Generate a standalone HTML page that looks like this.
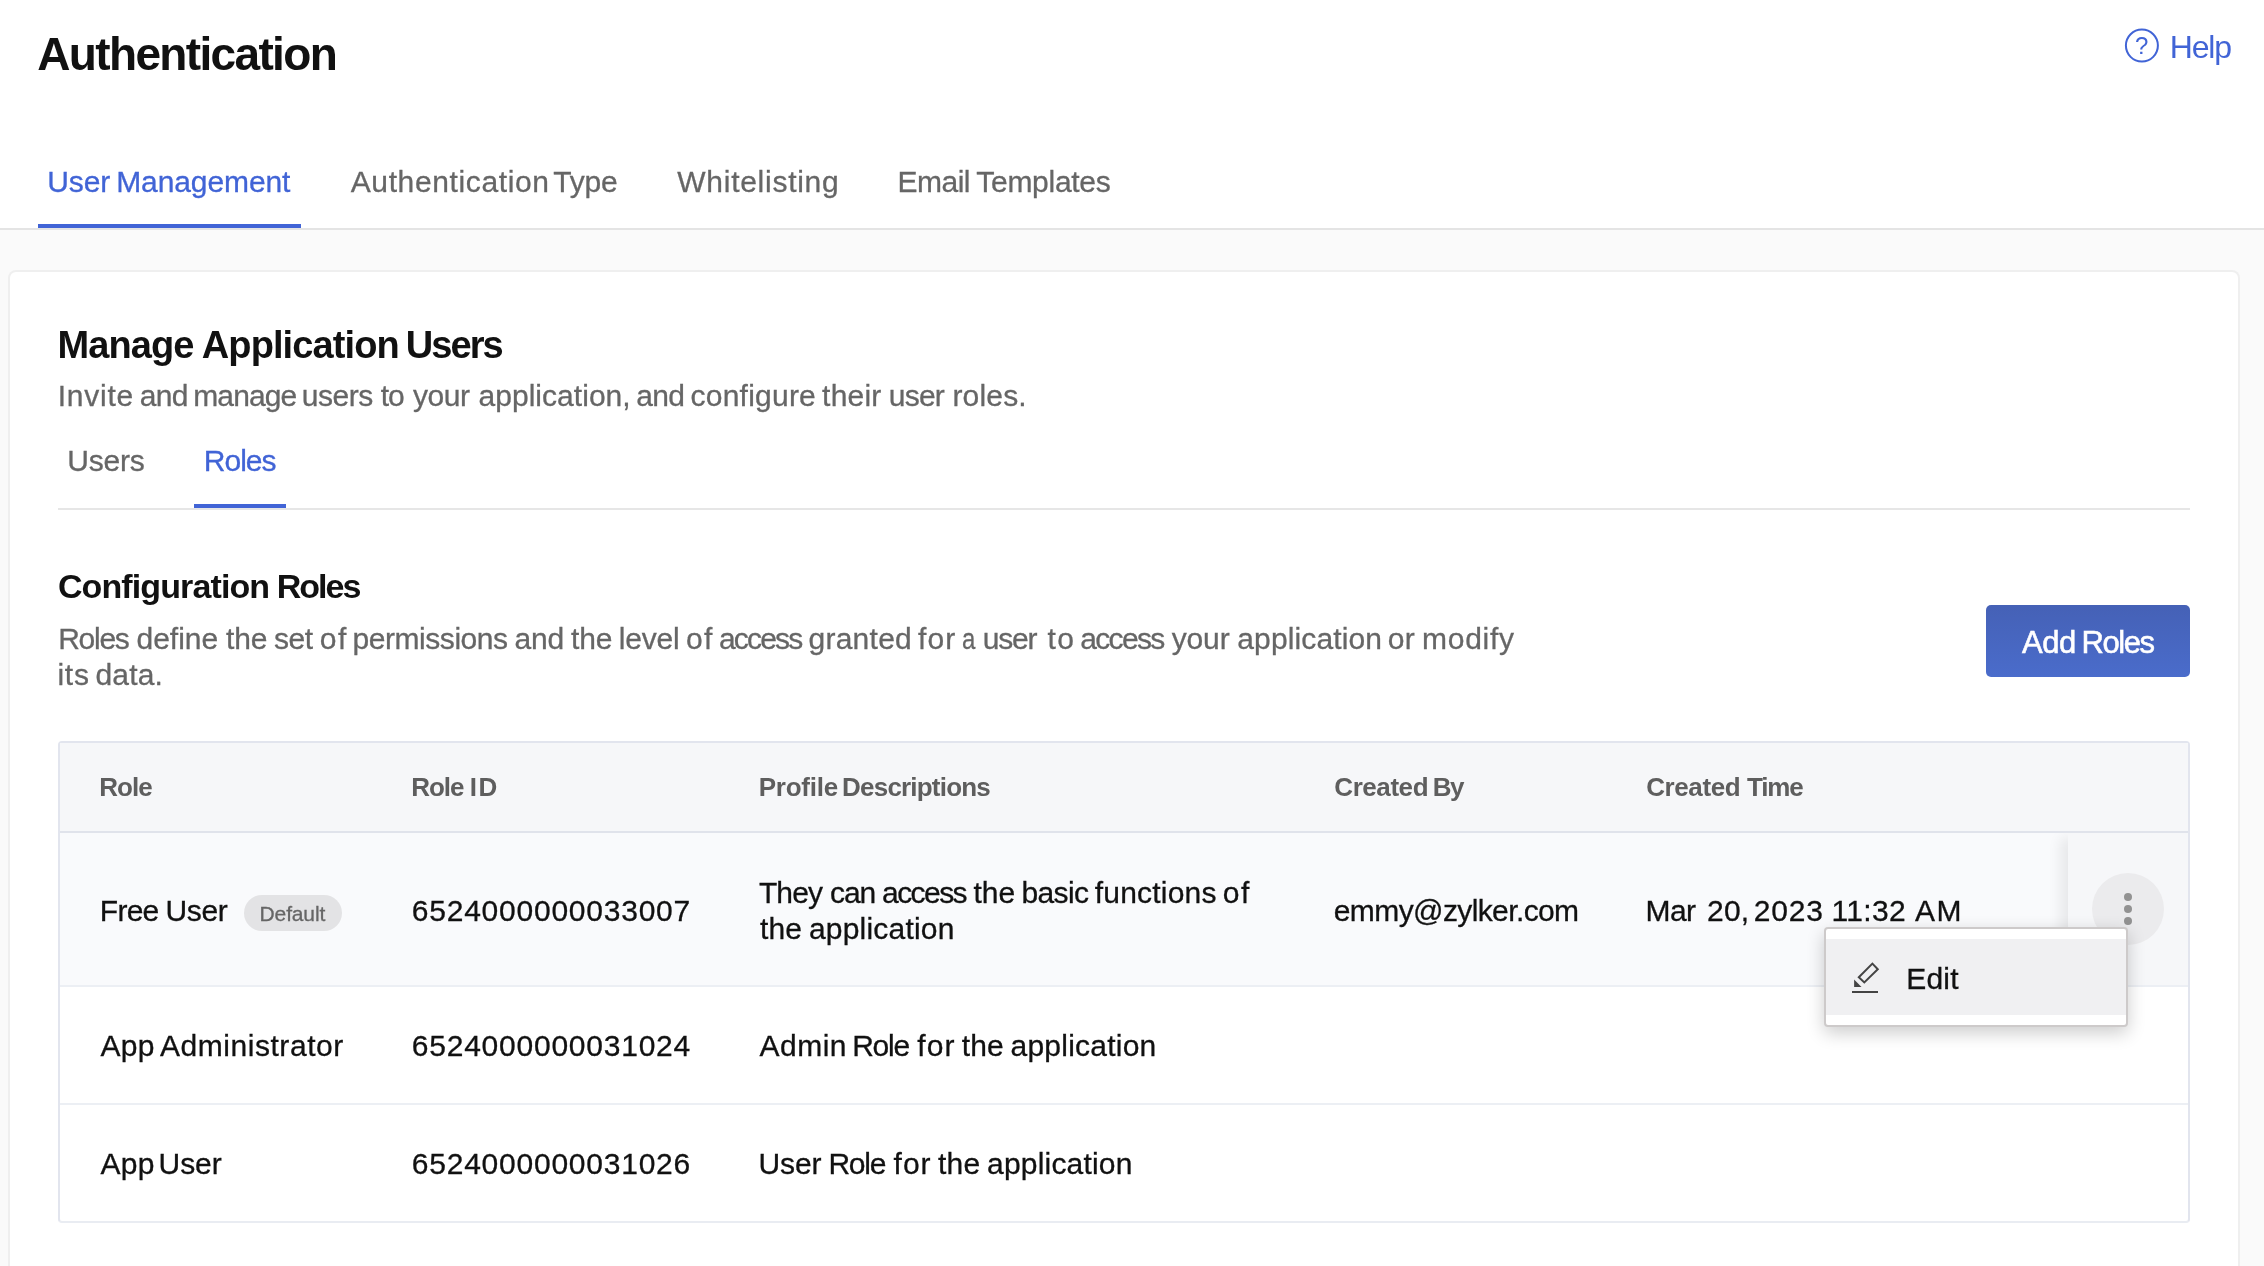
<!DOCTYPE html>
<html><head><meta charset="utf-8"><title>Authentication</title>
<style>
*{box-sizing:border-box;margin:0;padding:0}
html,body{width:2264px;height:1266px;overflow:hidden;background:#fafafa;font-family:"Liberation Sans",sans-serif}
.a{position:absolute}
#txt{position:absolute;left:0;top:0;width:2264px;height:1266px;will-change:transform}
.t{position:absolute;white-space:pre;font-family:"Liberation Sans",sans-serif}
#hdr{left:0;top:0;width:2264px;height:228px;background:#fff}
#hline{left:0;top:228px;width:2264px;height:2px;background:#e4e4e4}
#tabul{left:38px;top:224px;width:263px;height:4px;background:#4164d6}
#card{left:8px;top:270px;width:2232px;height:996px;background:#fff;border:2px solid #efefef;border-bottom:none;border-radius:8px 8px 0 0}
#stline{left:58px;top:508px;width:2132px;height:2px;background:#e6e6e6}
#stul{left:194px;top:504px;width:92px;height:4px;background:#4164d6}
#addbtn{left:1986px;top:605px;width:204px;height:72px;border-radius:5px;background:linear-gradient(#4561b6,#4a6ccb)}
#tbl{left:58px;top:741px;width:2132px;height:482px;border:2px solid #e2e5ee;border-bottom-color:#e9ecf2;border-radius:4px;background:#fff;overflow:hidden}
#thead{left:60px;top:743px;width:2128px;height:88px;background:#f6f7f9}
#thline{left:60px;top:831px;width:2128px;height:2px;background:#e0e3eb}
#row1{left:60px;top:833px;width:2128px;height:152px;background:#f9fafc}
#r1line{left:60px;top:985px;width:2128px;height:2px;background:#eceff4}
#r2line{left:60px;top:1103px;width:2128px;height:2px;background:#eceff4}
#sticky{left:2068px;top:833px;width:121px;height:152px;background:#f6f7f9;box-shadow:-8px 5px 12px rgba(0,0,0,0.07)}
#shclip{left:2030px;top:833px;width:158px;height:152px;overflow:hidden}
#dotbtn{left:2092px;top:873px;width:72px;height:72px;border-radius:50%;background:#ebebed}
.dot{position:absolute;left:2124px;width:8px;height:8px;border-radius:50%;background:#929292}
#badge{left:244px;top:895px;width:98px;height:36px;border-radius:18px;background:#e3e3e5}
#menu{left:1824px;top:927px;width:304px;height:100px;background:#fff;border:2px solid #cdcaca;border-radius:4px;box-shadow:0 6px 18px rgba(0,0,0,0.20)}
#mitem{left:1826px;top:939px;width:300px;height:76px;background:#f0f0f2}

#title{left:37.30px;top:30.56px;font-size:46px;line-height:46px;font-weight:700;color:#111111;letter-spacing:-1.654px}
#tab1_0{left:47.20px;top:166.60px;font-size:30px;line-height:30px;font-weight:400;color:#4164d6;letter-spacing:-0.100px;-webkit-text-stroke:0.3px currentColor}
#tab1_1{left:116.20px;top:166.60px;font-size:30px;line-height:30px;font-weight:400;color:#4164d6;letter-spacing:-0.100px;-webkit-text-stroke:0.3px currentColor}
#tab2_0{left:350.70px;top:166.60px;font-size:30px;line-height:30px;font-weight:400;color:#666666;letter-spacing:0.623px;-webkit-text-stroke:0.3px currentColor}
#tab2_1{left:553.20px;top:166.60px;font-size:30px;line-height:30px;font-weight:400;color:#666666;letter-spacing:-0.200px;-webkit-text-stroke:0.3px currentColor}
#tab3{left:677.30px;top:166.60px;font-size:30px;line-height:30px;font-weight:400;color:#666666;letter-spacing:0.727px;-webkit-text-stroke:0.3px currentColor}
#tab4_0{left:897.50px;top:166.60px;font-size:30px;line-height:30px;font-weight:400;color:#666666;letter-spacing:-0.500px;-webkit-text-stroke:0.3px currentColor}
#tab4_1{left:976.30px;top:166.60px;font-size:30px;line-height:30px;font-weight:400;color:#666666;letter-spacing:-0.287px;-webkit-text-stroke:0.3px currentColor}
#help{left:2169.80px;top:30.91px;font-size:32px;line-height:32px;font-weight:400;color:#4164d6;letter-spacing:-1.167px}
#h2_0{left:57.60px;top:325.83px;font-size:38px;line-height:38px;font-weight:700;color:#111111;letter-spacing:-0.960px}
#h2_1{left:201.80px;top:325.83px;font-size:38px;line-height:38px;font-weight:700;color:#111111;letter-spacing:-0.900px}
#h2_2{left:405.80px;top:325.83px;font-size:38px;line-height:38px;font-weight:700;color:#111111;letter-spacing:-1.925px}
#sub_0{left:57.70px;top:380.61px;font-size:30px;line-height:30px;font-weight:400;color:#666666;letter-spacing:0.760px;-webkit-text-stroke:0.3px currentColor}
#sub_1{left:139.80px;top:380.61px;font-size:30px;line-height:30px;font-weight:400;color:#666666;letter-spacing:-0.750px;-webkit-text-stroke:0.3px currentColor}
#sub_2{left:193.20px;top:380.61px;font-size:30px;line-height:30px;font-weight:400;color:#666666;letter-spacing:-0.860px;-webkit-text-stroke:0.3px currentColor}
#sub_3{left:301.80px;top:380.61px;font-size:30px;line-height:30px;font-weight:400;color:#666666;letter-spacing:-0.475px;-webkit-text-stroke:0.3px currentColor}
#sub_4{left:380.70px;top:380.61px;font-size:30px;line-height:30px;font-weight:400;color:#666666;letter-spacing:-1.000px;-webkit-text-stroke:0.3px currentColor}
#sub_5{left:413.00px;top:380.61px;font-size:30px;line-height:30px;font-weight:400;color:#666666;letter-spacing:-0.467px;-webkit-text-stroke:0.3px currentColor}
#sub_6{left:478.50px;top:380.61px;font-size:30px;line-height:30px;font-weight:400;color:#666666;letter-spacing:0.036px;-webkit-text-stroke:0.3px currentColor}
#sub_7{left:636.20px;top:380.61px;font-size:30px;line-height:30px;font-weight:400;color:#666666;letter-spacing:-0.600px;-webkit-text-stroke:0.3px currentColor}
#sub_8{left:690.50px;top:380.61px;font-size:30px;line-height:30px;font-weight:400;color:#666666;letter-spacing:0.237px;-webkit-text-stroke:0.3px currentColor}
#sub_9{left:822.10px;top:380.61px;font-size:30px;line-height:30px;font-weight:400;color:#666666;letter-spacing:0.200px;-webkit-text-stroke:0.3px currentColor}
#sub_10{left:888.80px;top:380.61px;font-size:30px;line-height:30px;font-weight:400;color:#666666;letter-spacing:-0.767px;-webkit-text-stroke:0.3px currentColor}
#sub_11{left:952.40px;top:380.61px;font-size:30px;line-height:30px;font-weight:400;color:#666666;letter-spacing:0.180px;-webkit-text-stroke:0.3px currentColor}
#st1{left:67.30px;top:446.11px;font-size:30px;line-height:30px;font-weight:400;color:#666666;letter-spacing:-0.250px;-webkit-text-stroke:0.3px currentColor}
#st2{left:203.80px;top:446.11px;font-size:30px;line-height:30px;font-weight:400;color:#4164d6;letter-spacing:-1.000px;-webkit-text-stroke:0.3px currentColor}
#h3_0{left:57.90px;top:568.72px;font-size:34px;line-height:34px;font-weight:700;color:#111111;letter-spacing:-0.883px}
#h3_1{left:276.80px;top:568.72px;font-size:34px;line-height:34px;font-weight:700;color:#111111;letter-spacing:-2.000px}
#d1_0{left:58.20px;top:623.61px;font-size:30px;line-height:30px;font-weight:400;color:#666666;letter-spacing:-1.275px;-webkit-text-stroke:0.3px currentColor}
#d1_1{left:136.50px;top:623.61px;font-size:30px;line-height:30px;font-weight:400;color:#666666;letter-spacing:0.000px;-webkit-text-stroke:0.3px currentColor}
#d1_2{left:225.90px;top:623.61px;font-size:30px;line-height:30px;font-weight:400;color:#666666;letter-spacing:-0.100px;-webkit-text-stroke:0.3px currentColor}
#d1_3{left:274.10px;top:623.61px;font-size:30px;line-height:30px;font-weight:400;color:#666666;letter-spacing:-0.500px;-webkit-text-stroke:0.3px currentColor}
#d1_4{left:319.80px;top:623.61px;font-size:30px;line-height:30px;font-weight:400;color:#666666;letter-spacing:1.500px;-webkit-text-stroke:0.3px currentColor}
#d1_5{left:352.60px;top:623.61px;font-size:30px;line-height:30px;font-weight:400;color:#666666;letter-spacing:-0.460px;-webkit-text-stroke:0.3px currentColor}
#d1_6{left:514.50px;top:623.61px;font-size:30px;line-height:30px;font-weight:400;color:#666666;letter-spacing:-0.200px;-webkit-text-stroke:0.3px currentColor}
#d1_7{left:571.00px;top:623.61px;font-size:30px;line-height:30px;font-weight:400;color:#666666;letter-spacing:-0.100px;-webkit-text-stroke:0.3px currentColor}
#d1_8{left:618.70px;top:623.61px;font-size:30px;line-height:30px;font-weight:400;color:#666666;letter-spacing:-0.150px;-webkit-text-stroke:0.3px currentColor}
#d1_9{left:685.90px;top:623.61px;font-size:30px;line-height:30px;font-weight:400;color:#666666;letter-spacing:1.400px;-webkit-text-stroke:0.3px currentColor}
#d1_10{left:719.00px;top:623.61px;font-size:30px;line-height:30px;font-weight:400;color:#666666;letter-spacing:-1.840px;-webkit-text-stroke:0.3px currentColor}
#d1_11{left:808.50px;top:623.61px;font-size:30px;line-height:30px;font-weight:400;color:#666666;letter-spacing:0.250px;-webkit-text-stroke:0.3px currentColor}
#d1_12{left:918.10px;top:623.61px;font-size:30px;line-height:30px;font-weight:400;color:#666666;letter-spacing:1.100px;-webkit-text-stroke:0.3px currentColor}
#d1_13{left:962.10px;top:623.61px;font-size:30px;line-height:30px;font-weight:400;color:#666666;letter-spacing:-1.500px;-webkit-text-stroke:0.3px currentColor;transform:scaleX(0.800);transform-origin:0 0}
#d1_14{left:982.80px;top:623.61px;font-size:30px;line-height:30px;font-weight:400;color:#666666;letter-spacing:-1.200px;-webkit-text-stroke:0.3px currentColor}
#d1_15{left:1047.45px;top:623.61px;font-size:30px;line-height:30px;font-weight:400;color:#666666;letter-spacing:1.500px;-webkit-text-stroke:0.3px currentColor}
#d1_16{left:1080.20px;top:623.61px;font-size:30px;line-height:30px;font-weight:400;color:#666666;letter-spacing:-1.640px;-webkit-text-stroke:0.3px currentColor}
#d1_17{left:1171.70px;top:623.61px;font-size:30px;line-height:30px;font-weight:400;color:#666666;letter-spacing:-0.133px;-webkit-text-stroke:0.3px currentColor}
#d1_18{left:1237.30px;top:623.61px;font-size:30px;line-height:30px;font-weight:400;color:#666666;letter-spacing:0.120px;-webkit-text-stroke:0.3px currentColor}
#d1_19{left:1387.70px;top:623.61px;font-size:30px;line-height:30px;font-weight:400;color:#666666;letter-spacing:0.400px;-webkit-text-stroke:0.3px currentColor}
#d1_20{left:1422.00px;top:623.61px;font-size:30px;line-height:30px;font-weight:400;color:#666666;letter-spacing:0.740px;-webkit-text-stroke:0.3px currentColor}
#d2_0{left:57.40px;top:659.61px;font-size:30px;line-height:30px;font-weight:400;color:#666666;letter-spacing:0.800px;-webkit-text-stroke:0.3px currentColor}
#d2_1{left:95.50px;top:659.61px;font-size:30px;line-height:30px;font-weight:400;color:#666666;letter-spacing:0.150px;-webkit-text-stroke:0.3px currentColor}
#btn_0{left:2021.90px;top:626.76px;font-size:31px;line-height:31px;font-weight:400;color:#ffffff;letter-spacing:-0.400px;-webkit-text-stroke:0.55px #fff}
#btn_1{left:2081.40px;top:626.76px;font-size:31px;line-height:31px;font-weight:400;color:#ffffff;letter-spacing:-1.400px;-webkit-text-stroke:0.55px #fff}
#th1{left:99.30px;top:774.49px;font-size:26px;line-height:26px;font-weight:700;color:#5e5e5e;letter-spacing:-1.000px}
#th2_0{left:411.30px;top:774.49px;font-size:26px;line-height:26px;font-weight:700;color:#5e5e5e;letter-spacing:-1.067px}
#th2_1{left:469.80px;top:774.49px;font-size:26px;line-height:26px;font-weight:700;color:#5e5e5e;letter-spacing:1.500px}
#th3_0{left:758.70px;top:774.49px;font-size:26px;line-height:26px;font-weight:700;color:#5e5e5e;letter-spacing:-0.250px}
#th3_1{left:842.10px;top:774.49px;font-size:26px;line-height:26px;font-weight:700;color:#5e5e5e;letter-spacing:-0.800px}
#th4_0{left:1334.30px;top:774.49px;font-size:26px;line-height:26px;font-weight:700;color:#5e5e5e;letter-spacing:-0.433px}
#th4_1{left:1432.85px;top:774.49px;font-size:26px;line-height:26px;font-weight:700;color:#5e5e5e;letter-spacing:-1.500px}
#th5_0{left:1646.20px;top:774.49px;font-size:26px;line-height:26px;font-weight:700;color:#5e5e5e;letter-spacing:-0.400px}
#th5_1{left:1747.00px;top:774.49px;font-size:26px;line-height:26px;font-weight:700;color:#5e5e5e;letter-spacing:-1.167px}
#r1a_0{left:99.80px;top:895.61px;font-size:30px;line-height:30px;font-weight:400;color:#111111;letter-spacing:-0.733px;-webkit-text-stroke:0.3px currentColor}
#r1a_1{left:165.50px;top:895.61px;font-size:30px;line-height:30px;font-weight:400;color:#111111;letter-spacing:-0.333px;-webkit-text-stroke:0.3px currentColor}
#bdg{left:259.60px;top:903.22px;font-size:21px;line-height:21px;font-weight:400;color:#666666;letter-spacing:-0.150px;-webkit-text-stroke:0.3px currentColor}
#r1b{left:411.80px;top:895.61px;font-size:30px;line-height:30px;font-weight:400;color:#111111;letter-spacing:0.767px;-webkit-text-stroke:0.3px currentColor}
#r1c1_0{left:758.90px;top:877.61px;font-size:30px;line-height:30px;font-weight:400;color:#111111;letter-spacing:-0.867px;-webkit-text-stroke:0.3px currentColor}
#r1c1_1{left:830.10px;top:877.61px;font-size:30px;line-height:30px;font-weight:400;color:#111111;letter-spacing:-1.150px;-webkit-text-stroke:0.3px currentColor}
#r1c1_2{left:882.10px;top:877.61px;font-size:30px;line-height:30px;font-weight:400;color:#111111;letter-spacing:-1.580px;-webkit-text-stroke:0.3px currentColor}
#r1c1_3{left:973.50px;top:877.61px;font-size:30px;line-height:30px;font-weight:400;color:#111111;letter-spacing:-0.050px;-webkit-text-stroke:0.3px currentColor}
#r1c1_4{left:1021.60px;top:877.61px;font-size:30px;line-height:30px;font-weight:400;color:#111111;letter-spacing:-0.675px;-webkit-text-stroke:0.3px currentColor}
#r1c1_5{left:1094.80px;top:877.61px;font-size:30px;line-height:30px;font-weight:400;color:#111111;letter-spacing:0.200px;-webkit-text-stroke:0.3px currentColor}
#r1c1_6{left:1222.85px;top:877.61px;font-size:30px;line-height:30px;font-weight:400;color:#111111;letter-spacing:1.500px;-webkit-text-stroke:0.3px currentColor}
#r1c2_0{left:759.90px;top:913.61px;font-size:30px;line-height:30px;font-weight:400;color:#111111;letter-spacing:0.200px;-webkit-text-stroke:0.3px currentColor}
#r1c2_1{left:809.00px;top:913.61px;font-size:30px;line-height:30px;font-weight:400;color:#111111;letter-spacing:0.190px;-webkit-text-stroke:0.3px currentColor}
#r1d{left:1333.80px;top:895.61px;font-size:30px;line-height:30px;font-weight:400;color:#111111;letter-spacing:-0.607px;-webkit-text-stroke:0.3px currentColor}
#r1e_0{left:1645.40px;top:895.61px;font-size:30px;line-height:30px;font-weight:400;color:#111111;letter-spacing:-0.500px;-webkit-text-stroke:0.3px currentColor}
#r1e_1{left:1707.10px;top:895.61px;font-size:30px;line-height:30px;font-weight:400;color:#111111;letter-spacing:0.200px;-webkit-text-stroke:0.3px currentColor}
#r1e_2{left:1753.70px;top:895.61px;font-size:30px;line-height:30px;font-weight:400;color:#111111;letter-spacing:0.867px;-webkit-text-stroke:0.3px currentColor}
#r1e_3{left:1831.40px;top:895.61px;font-size:30px;line-height:30px;font-weight:400;color:#111111;letter-spacing:0.350px;-webkit-text-stroke:0.3px currentColor}
#r1e_4{left:1915.10px;top:895.61px;font-size:30px;line-height:30px;font-weight:400;color:#111111;letter-spacing:1.300px;-webkit-text-stroke:0.3px currentColor}
#r2a_0{left:100.60px;top:1031.11px;font-size:30px;line-height:30px;font-weight:400;color:#111111;letter-spacing:0.250px;-webkit-text-stroke:0.3px currentColor}
#r2a_1{left:160.00px;top:1031.11px;font-size:30px;line-height:30px;font-weight:400;color:#111111;letter-spacing:0.542px;-webkit-text-stroke:0.3px currentColor}
#r2b{left:411.80px;top:1031.11px;font-size:30px;line-height:30px;font-weight:400;color:#111111;letter-spacing:0.767px;-webkit-text-stroke:0.3px currentColor}
#r2c_0{left:759.60px;top:1031.11px;font-size:30px;line-height:30px;font-weight:400;color:#111111;letter-spacing:0.475px;-webkit-text-stroke:0.3px currentColor}
#r2c_1{left:852.20px;top:1031.11px;font-size:30px;line-height:30px;font-weight:400;color:#111111;letter-spacing:-1.233px;-webkit-text-stroke:0.3px currentColor}
#r2c_2{left:917.30px;top:1031.11px;font-size:30px;line-height:30px;font-weight:400;color:#111111;letter-spacing:1.050px;-webkit-text-stroke:0.3px currentColor}
#r2c_3{left:961.80px;top:1031.11px;font-size:30px;line-height:30px;font-weight:400;color:#111111;letter-spacing:0.100px;-webkit-text-stroke:0.3px currentColor}
#r2c_4{left:1010.50px;top:1031.11px;font-size:30px;line-height:30px;font-weight:400;color:#111111;letter-spacing:0.230px;-webkit-text-stroke:0.3px currentColor}
#r3a_0{left:100.60px;top:1149.11px;font-size:30px;line-height:30px;font-weight:400;color:#111111;letter-spacing:0.250px;-webkit-text-stroke:0.3px currentColor}
#r3a_1{left:158.50px;top:1149.11px;font-size:30px;line-height:30px;font-weight:400;color:#111111;letter-spacing:-0.033px;-webkit-text-stroke:0.3px currentColor}
#r3b{left:411.80px;top:1149.11px;font-size:30px;line-height:30px;font-weight:400;color:#111111;letter-spacing:0.767px;-webkit-text-stroke:0.3px currentColor}
#r3c_0{left:758.50px;top:1149.11px;font-size:30px;line-height:30px;font-weight:400;color:#111111;letter-spacing:-0.100px;-webkit-text-stroke:0.3px currentColor}
#r3c_1{left:828.40px;top:1149.11px;font-size:30px;line-height:30px;font-weight:400;color:#111111;letter-spacing:-1.233px;-webkit-text-stroke:0.3px currentColor}
#r3c_2{left:893.50px;top:1149.11px;font-size:30px;line-height:30px;font-weight:400;color:#111111;letter-spacing:1.050px;-webkit-text-stroke:0.3px currentColor}
#r3c_3{left:938.10px;top:1149.11px;font-size:30px;line-height:30px;font-weight:400;color:#111111;letter-spacing:0.150px;-webkit-text-stroke:0.3px currentColor}
#r3c_4{left:987.10px;top:1149.11px;font-size:30px;line-height:30px;font-weight:400;color:#111111;letter-spacing:0.190px;-webkit-text-stroke:0.3px currentColor}
#edit{left:1906.30px;top:963.61px;font-size:30px;line-height:30px;font-weight:400;color:#111111;letter-spacing:0.167px;-webkit-text-stroke:0.3px currentColor}
</style></head><body>

<div class="a" id="hdr"></div>
<div class="a" id="hline"></div>
<div class="a" id="tabul"></div>
<svg class="a" style="left:2122px;top:26px" width="40" height="40" viewBox="0 0 40 40"><circle cx="19.9" cy="19.6" r="16" fill="none" stroke="#4164d6" stroke-width="2"/></svg>
<div class="a" id="card"></div>
<div class="a" id="stline"></div>
<div class="a" id="stul"></div>
<div class="a" id="addbtn"></div>
<div class="a" id="tbl"></div>
<div class="a" id="thead"></div>
<div class="a" id="thline"></div>
<div class="a" id="row1"></div>
<div class="a" id="r1line"></div>
<div class="a" id="r2line"></div>
<div class="a" id="shclip"><div class="a" id="sticky" style="left:38px;top:0"></div></div>
<div class="a" id="dotbtn"></div>
<div class="dot" style="top:893px"></div><div class="dot" style="top:905px"></div><div class="dot" style="top:917px"></div>
<div class="a" id="badge"></div>
<div class="a" id="menu"></div>
<div class="a" id="mitem"></div>
<svg class="a" style="left:1840px;top:950px" width="60" height="54" viewBox="0 0 60 54">
<path d="M32.4 13.6 L37.8 19.2 L24.3 32.4 L18.8 27.2 Z" fill="none" stroke="#444" stroke-width="2" stroke-linejoin="miter"/>
<path d="M14.1 29.4 L14.1 36.9 L21.5 36.9 Z" fill="#444"/>
<rect x="12" y="41" width="26" height="2" fill="#444"/>
</svg>

<div id="txt">
<div class="t" id="qm" style="left:2135px;top:34px;font-size:24px;line-height:24px;color:#4164d6">?</div>
<div class="t" id="title">Authentication</div>
<div class="t" id="tab1_0">User</div>
<div class="t" id="tab1_1">Management</div>
<div class="t" id="tab2_0">Authentication</div>
<div class="t" id="tab2_1">Type</div>
<div class="t" id="tab3">Whitelisting</div>
<div class="t" id="tab4_0">Email</div>
<div class="t" id="tab4_1">Templates</div>
<div class="t" id="help">Help</div>
<div class="t" id="h2_0">Manage</div>
<div class="t" id="h2_1">Application</div>
<div class="t" id="h2_2">Users</div>
<div class="t" id="sub_0">Invite</div>
<div class="t" id="sub_1">and</div>
<div class="t" id="sub_2">manage</div>
<div class="t" id="sub_3">users</div>
<div class="t" id="sub_4">to</div>
<div class="t" id="sub_5">your</div>
<div class="t" id="sub_6">application,</div>
<div class="t" id="sub_7">and</div>
<div class="t" id="sub_8">configure</div>
<div class="t" id="sub_9">their</div>
<div class="t" id="sub_10">user</div>
<div class="t" id="sub_11">roles.</div>
<div class="t" id="st1">Users</div>
<div class="t" id="st2">Roles</div>
<div class="t" id="h3_0">Configuration</div>
<div class="t" id="h3_1">Roles</div>
<div class="t" id="d1_0">Roles</div>
<div class="t" id="d1_1">define</div>
<div class="t" id="d1_2">the</div>
<div class="t" id="d1_3">set</div>
<div class="t" id="d1_4">of</div>
<div class="t" id="d1_5">permissions</div>
<div class="t" id="d1_6">and</div>
<div class="t" id="d1_7">the</div>
<div class="t" id="d1_8">level</div>
<div class="t" id="d1_9">of</div>
<div class="t" id="d1_10">access</div>
<div class="t" id="d1_11">granted</div>
<div class="t" id="d1_12">for</div>
<div class="t" id="d1_13">a</div>
<div class="t" id="d1_14">user</div>
<div class="t" id="d1_15">to</div>
<div class="t" id="d1_16">access</div>
<div class="t" id="d1_17">your</div>
<div class="t" id="d1_18">application</div>
<div class="t" id="d1_19">or</div>
<div class="t" id="d1_20">modify</div>
<div class="t" id="d2_0">its</div>
<div class="t" id="d2_1">data.</div>
<div class="t" id="btn_0">Add</div>
<div class="t" id="btn_1">Roles</div>
<div class="t" id="th1">Role</div>
<div class="t" id="th2_0">Role</div>
<div class="t" id="th2_1">ID</div>
<div class="t" id="th3_0">Profile</div>
<div class="t" id="th3_1">Descriptions</div>
<div class="t" id="th4_0">Created</div>
<div class="t" id="th4_1">By</div>
<div class="t" id="th5_0">Created</div>
<div class="t" id="th5_1">Time</div>
<div class="t" id="r1a_0">Free</div>
<div class="t" id="r1a_1">User</div>
<div class="t" id="bdg">Default</div>
<div class="t" id="r1b">6524000000033007</div>
<div class="t" id="r1c1_0">They</div>
<div class="t" id="r1c1_1">can</div>
<div class="t" id="r1c1_2">access</div>
<div class="t" id="r1c1_3">the</div>
<div class="t" id="r1c1_4">basic</div>
<div class="t" id="r1c1_5">functions</div>
<div class="t" id="r1c1_6">of</div>
<div class="t" id="r1c2_0">the</div>
<div class="t" id="r1c2_1">application</div>
<div class="t" id="r1d">emmy@zylker.com</div>
<div class="t" id="r1e_0">Mar</div>
<div class="t" id="r1e_1">20,</div>
<div class="t" id="r1e_2">2023</div>
<div class="t" id="r1e_3">11:32</div>
<div class="t" id="r1e_4">AM</div>
<div class="t" id="r2a_0">App</div>
<div class="t" id="r2a_1">Administrator</div>
<div class="t" id="r2b">6524000000031024</div>
<div class="t" id="r2c_0">Admin</div>
<div class="t" id="r2c_1">Role</div>
<div class="t" id="r2c_2">for</div>
<div class="t" id="r2c_3">the</div>
<div class="t" id="r2c_4">application</div>
<div class="t" id="r3a_0">App</div>
<div class="t" id="r3a_1">User</div>
<div class="t" id="r3b">6524000000031026</div>
<div class="t" id="r3c_0">User</div>
<div class="t" id="r3c_1">Role</div>
<div class="t" id="r3c_2">for</div>
<div class="t" id="r3c_3">the</div>
<div class="t" id="r3c_4">application</div>
<div class="t" id="edit">Edit</div>
</div>
</body></html>
